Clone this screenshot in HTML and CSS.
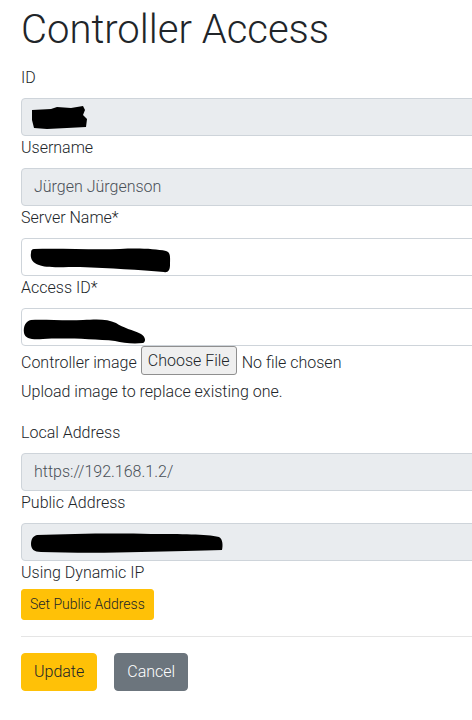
FILE: index.html
```html
<!DOCTYPE html>
<html lang="en">
<head>
<meta charset="utf-8">
<title>Controller Access</title>
<link rel="stylesheet" href="styles.css">
</head>
<body>
<main class="page">
  <h1 class="title">Controller Access</h1>
  <form class="form">
    <div class="field field-first">
      <label class="label">ID</label>
      <div class="control readonly">
        <svg class="redact" width="60" height="24" viewBox="0 0 60 24"><path d="M1 4 L20 3 L26 1 L40 2 L52 0 L54 4 L52 9 L56 13 L55 21 L36 22 L16 23 L3 22 L1 14 Z" fill="#000"/></svg>
      </div>
    </div>
    <div class="field">
      <label class="label">Username</label>
      <div class="control readonly"><span class="value">Jürgen Jürgenson</span></div>
    </div>
    <div class="field">
      <label class="label">Server Name*</label>
      <div class="control">
        <svg class="redact redact-server" width="142" height="26" viewBox="0 0 142 26"><path d="M4 1 C30 0 60 2 90 1 C110 0 125 1 136 3 C141 4 140 10 140 17 C140 22 138 25 134 24 C110 22 80 20 50 19 C30 19 15 20 9 17 C2 15 0 10 1 5 C1 2 2 1 4 1 Z" fill="#000"/></svg>
      </div>
    </div>
    <div class="field">
      <label class="label">Access ID*</label>
      <div class="control">
        <svg class="redact redact-access" width="124" height="26" viewBox="0 0 124 26"><path d="M8 2 C20 1 40 3 60 2 C75 1 85 1 93 5 C100 10 110 12 118 16 C123 19 123 24 120 25 C110 26 100 25 92 23 C70 21 40 20 20 21 C10 22 2 21 1 15 C0 8 3 3 8 2 Z" fill="#000"/></svg>
      </div>
    </div>
    <div class="file-row">
      <span class="file-label">Controller image</span>
      <button type="button" class="file-btn">Choose File</button>
      <span class="file-status">No file chosen</span>
    </div>
    <p class="help">Upload image to replace existing one.</p>
    <div class="field">
      <label class="label">Local Address</label>
      <div class="control readonly"><span class="value">https://192.168.1.2/</span></div>
    </div>
    <div class="field">
      <label class="label">Public Address</label>
      <div class="control readonly">
        <svg class="redact redact-public" width="192" height="22" viewBox="0 0 192 22"><path d="M6 3 C40 2 80 1 120 2 C150 2 175 2 188 5 C192 7 192 14 191 18 C170 19 140 19 110 20 C80 21 40 21 10 20 C3 20 0 17 0 12 C0 7 2 4 6 3 Z" fill="#000"/></svg>
      </div>
    </div>
    <p class="dyn">Using Dynamic IP</p>
    <button type="button" class="btn btn-warning btn-sm">Set Public Address</button>
    <hr class="divider">
    <div class="actions">
      <button type="submit" class="btn btn-warning">Update</button>
      <button type="button" class="btn btn-secondary">Cancel</button>
    </div>
  </form>
</main>
</body>
</html>
```
FILE: styles.css
```css
html, body {
  margin: 0;
  padding: 0;
  overflow: hidden;
  background: #fff;
}
body {
  font-family: Roboto, "Liberation Sans", sans-serif;
  font-weight: 300;
  font-size: 16px;
  line-height: 24px;
  color: #212529;
}
.page {
  padding: 6px 0 0 21px;
}
.title {
  margin: 0 0 12px;
  font-size: 40px;
  line-height: 48px;
  font-weight: 300;
  color: #212529;
}
.form {
  width: 520px;
  display: flex;
  flex-direction: column;
  align-items: flex-start;
}
.field {
  display: flex;
  flex-direction: column;
  align-self: stretch;
}
.label {
  display: block;
  margin-bottom: 8px;
}
.control {
  box-sizing: border-box;
  height: 38px;
  border: 1px solid #ced4da;
  border-radius: 4px;
  background: #fff;
  padding: 0 12px;
  display: flex;
  align-items: center;
  color: #495057;
  position: relative;
}
.control.readonly {
  background: #e9ecef;
}
.value {
  font-weight: 300;
}
.redact {
  position: absolute;
  display: block;
}
.field-first .redact { left: 9px; top: 7px; }
.redact-server { left: 8px; top: 9px; }
.redact-access { left: 1px; top: 9px; }
.redact-public { left: 9px; top: 8px; }

.file-row {
  display: flex;
  align-items: center;
  height: 34px;
}
.file-label {
  margin-right: 4px;
}
.file-btn {
  box-sizing: border-box;
  height: 29px;
  margin-top: -5px;
  padding: 0 6px;
  font: 300 16px/24px Roboto, "Liberation Sans", sans-serif;
  color: #212529;
  background: #efefef;
  border: 1px solid #8f8f8f;
  border-radius: 3px;
}
.file-status {
  margin-left: 5px;
}
.help {
  margin: 0 0 17px;
}
.dyn {
  margin: 0 0 4px;
}
.btn {
  box-sizing: border-box;
  border: 1px solid transparent;
  border-radius: 4px;
  font-family: Roboto, "Liberation Sans", sans-serif;
  font-weight: 300;
  font-size: 16px;
  line-height: 24px;
  padding: 6px 12px;
  cursor: pointer;
}
.btn-sm {
  font-size: 14px;
  line-height: 21px;
  padding: 4px 8px;
  border-radius: 3px;
}
.btn-warning {
  background: #ffc107;
  border-color: #ffc107;
  color: #212529;
}
.btn-secondary {
  background: #6c757d;
  border-color: #6c757d;
  color: #fff;
}
.divider {
  align-self: stretch;
  margin: 16px 0;
  border: 0;
  border-top: 1px solid rgba(0, 0, 0, 0.1);
  height: 0;
}
.actions {
  display: flex;
  gap: 17px;
}
```
